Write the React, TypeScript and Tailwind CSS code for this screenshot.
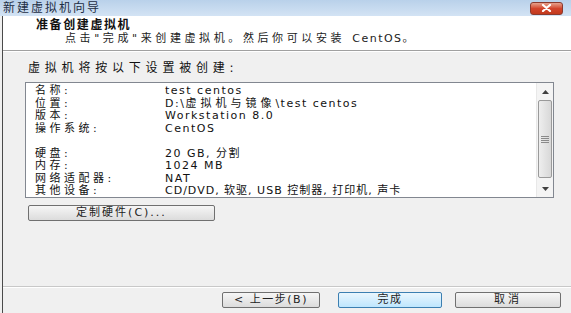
import React from "react";

const cjk = '"DejaVu Sans", "Noto Sans CJK SC", sans-serif';

function Row({ label, value }: { label: string; value: React.ReactNode }) {
  return (
    <div className="flex h-[12.5px] items-center whitespace-nowrap">
      <div className="w-[130px] tracking-[3.5px]">{label}</div>
      <div className="tracking-[1.5px]">{value}</div>
    </div>
  );
}

function Btn({ children, primary, className }: { children: React.ReactNode; primary?: boolean; className?: string }) {
  return (
    <div
      className={
        "flex h-[16px] items-center justify-center rounded-[2px] border text-[11px] text-[#222] " +
        (primary
          ? "border-[#3c7fb1] bg-gradient-to-b from-[#eaf6fd] to-[#bee6fd] "
          : "border-[#707070] bg-gradient-to-b from-[#f6f6f6] to-[#dcdcdc] ") +
        (className ?? "")
      }
    >
      {children}
    </div>
  );
}

export default function App() {
  return (
    <div
      className="relative flex h-[313px] w-[571px] flex-col overflow-hidden bg-[#f0f0f0] text-[11px] text-[#111]"
      style={{ fontFamily: cjk }}
    >
      {/* title bar */}
      <div className="flex h-[16px] items-center justify-between bg-gradient-to-b from-[#b9d1ea] to-[#d3e3f4] pl-[3px] pr-[8px]">
        <span className="text-[12px] leading-none tracking-[2px] text-[#1e2e44]">新建虚拟机向导</span>
        <div className="flex h-[13px] w-[33px] items-center justify-center rounded-[3px] border border-[#8a3a2e] bg-gradient-to-b from-[#e5a08c] via-[#d2442b] to-[#c23a1e]">
          <svg width="11" height="8" viewBox="0 0 11 8">
            <path d="M2 1 L9 7 M9 1 L2 7" stroke="#fff" strokeWidth="2.2" strokeLinecap="round" />
          </svg>
        </div>
      </div>

      <div className="ml-[2px] flex flex-1 flex-col border-l border-[#4a4a4a]">
        {/* header */}
        <div className="h-[35px] border-b border-[#a0a0a0] bg-white pt-[2px]">
          <div className="pl-[33px] text-[12px] font-bold leading-[14px] tracking-[1.6px]">准备创建虚拟机</div>
          <div className="pl-[62px] text-[11px] leading-[13px] tracking-[3.6px] text-[#222]">
            点击"完成"来创建虚拟机。然后你可以安装 <span className="tracking-[1.5px]">CentOS</span>。
          </div>
        </div>

        {/* body */}
        <div className="flex flex-1 flex-col border-t border-white px-[22px] pt-[9px]">
          <div className="pl-[3px] text-[12px] leading-[14px] tracking-[4.8px]">虚拟机将按以下设置被创建:</div>
          <div className="mt-[7px] flex h-[116px] w-[529px] border border-[#828790] bg-white">
            <div className="flex-1 overflow-hidden pl-[9px] pt-[2px]">
              <Row label="名称:" value="test centos" />
              <Row
                label="位置:"
                value={
                  <>
                    D:\<span className="tracking-[4px]">虚拟机与镜像</span>\test centos
                  </>
                }
              />
              <Row label="版本:" value="Workstation 8.0" />
              <Row label="操作系统:" value="CentOS" />
              <div className="h-[12.5px]" />
              <Row label="硬盘:" value="20 GB, 分割" />
              <Row label="内存:" value="1024 MB" />
              <Row label="网络适配器:" value="NAT" />
              <Row label="其他设备:" value={<span className="tracking-[1px]">CD/DVD, 软驱, USB 控制器, 打印机, 声卡</span>} />
            </div>
            {/* scrollbar */}
            <div className="flex w-[17px] flex-col border-l border-[#e8e8e8] bg-[#f4f4f4]">
              <div className="flex h-[17px] items-center justify-center">
                <svg width="7" height="4" viewBox="0 0 7 4">
                  <path d="M0 4 L3.5 0 L7 4 Z" fill="#404040" />
                </svg>
              </div>
              <div className="mx-[1px] flex h-[78px] items-center justify-center rounded-[2px] border border-[#9a9a9a] bg-gradient-to-r from-[#eeeeee] to-[#d8d8d8]">
                <div className="flex flex-col gap-[1px]">
                  <div className="h-[1px] w-[8px] bg-[#8a8a8a]" />
                  <div className="h-[1px] w-[8px] bg-[#8a8a8a]" />
                  <div className="h-[1px] w-[8px] bg-[#8a8a8a]" />
                  <div className="h-[1px] w-[8px] bg-[#8a8a8a]" />
                </div>
              </div>
              <div className="flex-1" />
              <div className="flex h-[17px] items-center justify-center">
                <svg width="7" height="4" viewBox="0 0 7 4">
                  <path d="M0 0 L3.5 4 L7 0 Z" fill="#404040" />
                </svg>
              </div>
            </div>
          </div>
          <div className="mt-[7px] pl-[3px]">
            <Btn className="w-[187px] tracking-[2px]">定制硬件(C)...</Btn>
          </div>
          <div className="flex-1" />
        </div>

        {/* footer */}
        <div className="h-[27px] border-t border-[#c8c8c8]">
          <div className="flex border-t border-white pl-[219px] pt-[4px]">
            <Btn className="w-[98px] tracking-[1.5px]">&lt; 上一步(B)</Btn>
            <Btn primary className="ml-[18px] w-[104px] tracking-[1.5px]">完成</Btn>
            <Btn className="ml-[13px] w-[106px] tracking-[3px]">取消</Btn>
          </div>
        </div>
      </div>
    </div>
  );
}
